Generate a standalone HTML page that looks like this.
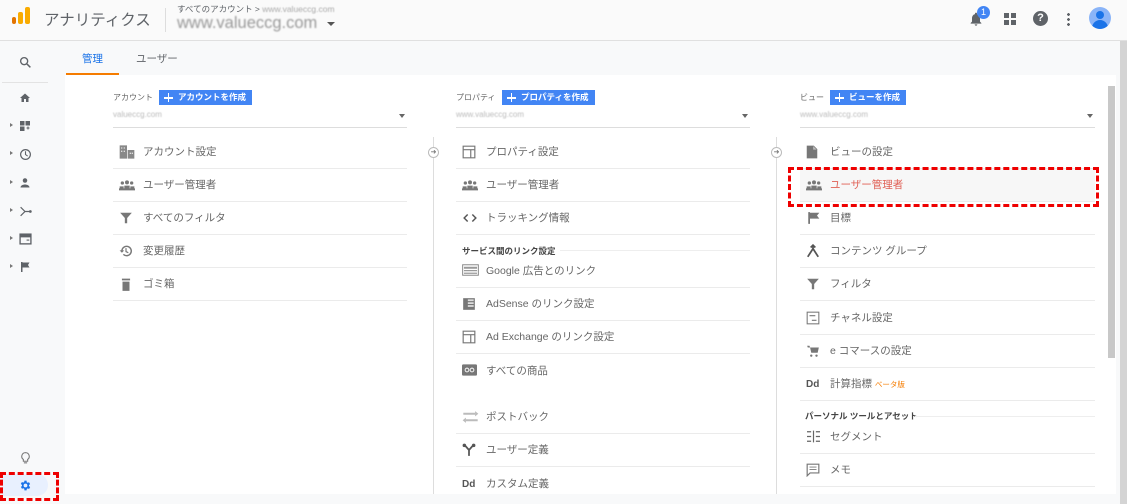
<!DOCTYPE html>
<html><head><meta charset="utf-8"><style>
*{margin:0;padding:0;box-sizing:border-box}
body{width:1127px;height:504px;overflow:hidden;background:#f8f9fa;font-family:"Liberation Sans","Noto Sans CJK JP",sans-serif;position:relative;color:#5f6368}
.a{position:absolute}
.hdr{left:0;top:0;width:1127px;height:41px;background:#fafafa;border-bottom:1px solid #e0e0e0}
.side{left:0;top:41px;width:65px;height:463px;background:#f8f9fa}
.card{left:65px;top:75px;width:1051px;height:419px;background:#fff}
.it{position:absolute;height:33px;font-size:10.5px;color:#666;line-height:33px;border-bottom:1px solid #ebebeb}
.it svg{position:absolute;left:6px;top:9px}
.it span{position:absolute;left:30px}
.lbl{position:absolute;font-size:9px;color:#444;font-weight:bold}
.btn{position:absolute;height:15px;background:#4285f4;color:#fff;font-size:8.5px;font-weight:bold;line-height:15px;padding:0 6px 0 19px}
.btn:before{content:"";position:absolute;left:5px;top:7px;width:9px;height:1.6px;background:#fff}
.btn:after{content:"";position:absolute;left:8.7px;top:3.3px;width:1.6px;height:9px;background:#fff}
.dd{position:absolute;height:20px;border-bottom:1px solid #ddd;font-size:8px;color:#bbb;line-height:14px}
.dd i{filter:blur(.6px);font-style:normal}
.dd:after{content:"";position:absolute;right:2px;top:6px;border:3px solid transparent;border-top:4px solid #666}
.vl{position:absolute;width:1px;background:#ddd;top:137px;height:357px}
.ci{position:absolute;width:11px;height:11px;border:1px solid #bbb;border-radius:50%;background:#fff;font-size:7px;line-height:9px;text-align:center;color:#777}
.sic{position:absolute;left:19px}
.tri{position:absolute;left:10px;border:2.5px solid transparent;border-left:3px solid #777}
</style></head><body>
<div class="a hdr"></div>
<div class="a" style="left:12px;top:17px;width:4px;height:7px;background:#e37400;border-radius:2px"></div>
<div class="a" style="left:18px;top:12px;width:5px;height:12px;background:#f9ab00;border-radius:2px"></div>
<div class="a" style="left:25px;top:7px;width:5px;height:17px;background:#f9ab00;border-radius:2px"></div>
<div class="a" style="left:44px;top:8px;font-size:15.5px;color:#5f6368">アナリティクス</div>
<div class="a" style="left:165px;top:8px;width:1px;height:24px;background:#ddd"></div>
<div class="a" style="left:177px;top:3px;font-size:8.5px;color:#5f6368">すべてのアカウント &gt; <span style="color:#aaa;filter:blur(.5px)">www.valueccg.com</span></div>
<div class="a" style="left:177px;top:14px;font-size:16.5px;color:#999;filter:blur(.8px)">www.valueccg.com</div>
<div class="a" style="left:327px;top:22px;border:4px solid transparent;border-top:4px solid #555"></div>
<svg class="a" style="left:968px;top:10px" width="16" height="18" viewBox="0 0 24 24"><path fill="#5f6368" d="M12 22c1.1 0 2-.9 2-2h-4c0 1.1.9 2 2 2zm6-6v-5c0-3.07-1.640-5.64-4.5-6.32V4c0-.83-.67-1.5-1.5-1.5s-1.5.67-1.5 1.5v.68C7.63 5.36 6 7.920 6 11v5l-2 2v1h16v-1l-2-2z"/></svg>
<div class="a" style="left:977px;top:6px;width:13px;height:13px;border-radius:50%;background:#4285f4;color:#fff;font-size:9px;text-align:center;line-height:13px">1</div>
<div class="a" style="left:1004px;top:13px;width:12px;height:12px;background:linear-gradient(#5f6368,#5f6368) 0 0/5px 5px no-repeat,linear-gradient(#5f6368,#5f6368) 7px 0/5px 5px no-repeat,linear-gradient(#5f6368,#5f6368) 0 7px/5px 5px no-repeat,linear-gradient(#5f6368,#5f6368) 7px 7px/5px 5px no-repeat"></div>
<div class="a" style="left:1033px;top:11px;width:15px;height:15px;border-radius:50%;background:#5f6368;color:#fff;font-size:11px;font-weight:bold;text-align:center;line-height:15px">?</div>
<div class="a" style="left:1067px;top:12px;width:3px;height:14px;background:radial-gradient(circle,#5f6368 1.3px,transparent 1.5px) 0 0/3px 5px"></div>
<div class="a" style="left:1089px;top:7px;width:22px;height:22px;border-radius:50%;background:#8ab4f8;overflow:hidden"><div class="a" style="left:7px;top:4px;width:8px;height:8px;border-radius:50%;background:#1a73e8"></div><div class="a" style="left:3px;top:13px;width:16px;height:12px;border-radius:8px 8px 0 0;background:#1a73e8"></div></div>
<div class="a side"></div>
<div class="a" style="left:2px;top:82px;width:46px;height:1px;background:#e3e3e3"></div>
<svg class="sic" style="top:56px" width="13" height="13" viewBox="0 0 24 24"><circle cx="9.5" cy="9.5" r="6.5" fill="none" stroke="#5f6368" stroke-width="2.5"/><path d="M14.5 14.5L21 21" stroke="#5f6368" stroke-width="2.8"/></svg>
<svg class="sic" style="top:92px" width="12" height="12" viewBox="0 0 24 24"><path fill="#5f6368" d="M10 20v-6h4v6h5v-8h3L12 3 2 12h3v8z"/></svg>
<div class="tri" style="top:123px"></div><svg class="sic" style="top:120px" width="12" height="12" viewBox="0 0 24 24"><path fill="#5f6368" d="M2 2h9v9H2zM13 2h9v9h-9zM2 13h9v9H2zM15 15h2v-2h2v2h2v2h-2v2h-2v-2h-2z"/></svg>
<div class="tri" style="top:151px"></div><svg class="sic" style="top:148px" width="13" height="13" viewBox="0 0 24 24"><circle cx="12" cy="12" r="9" fill="none" stroke="#5f6368" stroke-width="2.2"/><path d="M12 6v6l4 3" fill="none" stroke="#5f6368" stroke-width="2"/></svg>
<div class="tri" style="top:180px"></div><svg class="sic" style="top:177px" width="12" height="12" viewBox="0 0 24 24"><circle cx="12" cy="7" r="4.5" fill="#5f6368"/><path fill="#5f6368" d="M3 21c0-4 5-6 9-6s9 2 9 6z"/></svg>
<div class="tri" style="top:208px"></div><svg class="sic" style="top:205px" width="13" height="13" viewBox="0 0 24 24"><path d="M3 4l8 8-8 8M11 12h10" fill="none" stroke="#5f6368" stroke-width="2.2"/><circle cx="21" cy="12" r="2.5" fill="#5f6368"/></svg>
<div class="tri" style="top:236px"></div><svg class="sic" style="top:233px" width="13" height="12" viewBox="0 0 24 22"><rect x="2" y="2" width="20" height="18" fill="none" stroke="#5f6368" stroke-width="2.5"/><rect x="2" y="2" width="20" height="6" fill="#5f6368"/><rect x="14" y="12" width="5" height="2" fill="#5f6368"/></svg>
<div class="tri" style="top:264px"></div><svg class="sic" style="top:261px" width="12" height="12" viewBox="0 0 24 24"><path fill="#5f6368" d="M4 2h3v20H4zM7 3h14l-3 5 3 5H7z"/></svg>
<svg class="sic" style="top:451px" width="13" height="14" viewBox="0 0 24 26"><path d="M12 3a7 7 0 0 0-4 12.7V19h8v-3.3A7 7 0 0 0 12 3z" fill="none" stroke="#777" stroke-width="2"/><path d="M9 22h6" stroke="#777" stroke-width="2"/></svg>
<div class="a" style="left:2px;top:474px;width:46px;height:22px;border-radius:0 11px 11px 0;background:#e8f0fe"></div>
<svg class="a" style="left:19px;top:479px" width="13" height="13" viewBox="0 0 24 24"><path fill="#1a73e8" d="M19.4 13a7.6 7.6 0 0 0 0-2l2.1-1.6-2-3.5-2.5 1a7 7 0 0 0-1.7-1L15 3h-4l-.4 2.6a7 7 0 0 0-1.7 1l-2.5-1-2 3.5L6.6 11a7.6 7.6 0 0 0 0 2l-2.1 1.6 2 3.5 2.5-1a7 7 0 0 0 1.7 1L11 21h4l.4-2.6a7 7 0 0 0 1.7-1l2.5 1 2-3.5zM13 15.5a3.5 3.5 0 1 1 0-7 3.5 3.5 0 0 1 0 7z" transform="translate(-1 0)"/></svg>
<div class="a" style="left:0;top:472px;width:59px;height:29px;border:3px dashed #e00"></div>
<div class="a" style="left:82px;top:51px;font-size:10.5px;color:#1a73e8">管理</div>
<div class="a" style="left:66px;top:73px;width:53px;height:2px;background:#f57c00"></div>
<div class="a" style="left:136px;top:51px;font-size:10.5px;color:#5f6368">ユーザー</div>
<div class="a card"></div>
<div class="a" style="left:1108px;top:86px;width:7px;height:272px;background:#c8c8c8"></div>
<div class="a" style="left:1120px;top:41px;width:7px;height:463px;background:#d4d4d4"></div>
<div class="a" style="left:65px;top:494px;width:1055px;height:10px;background:#f8f9fa"></div>

<div class="lbl" style="left:113px;top:92px;font-weight:normal;color:#666;font-size:8px">アカウント</div>
<div class="btn" style="left:159px;top:90px">アカウントを作成</div>
<div class="dd" style="left:113px;top:108px;width:294px"><i>valueccg.com</i></div>
<div class="it" style="left:113px;top:136px;width:294px"><svg width="16" height="14" viewBox="0 0 24 20"><path fill="#888" d="M1 0h11v20H1zM13 7h10v13H13z"/><path fill="#ddd" d="M3 3h2v2H3zm4 0h2v2H7zM3 8h2v2H3zm4 0h2v2H7zM16 11h2v2h-2zm3 0h2v2h-2z"/></svg><span>アカウント設定</span></div>
<div class="it" style="left:113px;top:169px;width:294px"><svg width="16" height="14" viewBox="0 0 24 20"><circle cx="5" cy="7" r="2.5" fill="#777"/><circle cx="12" cy="6" r="3" fill="#777"/><circle cx="19" cy="7" r="2.5" fill="#777"/><path fill="#777" d="M0 15h24v3H0zM8 11h8v4H8zM1 12h6v3H1zM17 12h6v3h-6z"/></svg><span>ユーザー管理者</span></div>
<div class="it" style="left:113px;top:202px;width:294px"><svg width="14" height="14" viewBox="0 0 24 24"><path fill="#777" d="M2 3h20l-8 9v9h-4v-9z"/></svg><span>すべてのフィルタ</span></div>
<div class="it" style="left:113px;top:235px;width:294px"><svg width="14" height="14" viewBox="0 0 24 24"><path d="M5 12a8 8 0 1 1 2.5 5.8" fill="none" stroke="#777" stroke-width="2.5"/><path fill="#777" d="M1 11h8l-4 4z"/><path d="M12 7v6l4 2" fill="none" stroke="#777" stroke-width="2"/></svg><span>変更履歴</span></div>
<div class="it" style="left:113px;top:268px;width:294px"><svg width="14" height="15" viewBox="0 0 24 24"><path fill="#777" d="M5 2h14v3H5zM6 7h12v16H6z"/></svg><span>ゴミ箱</span></div>

<div class="vl" style="left:433px"></div><div class="ci" style="left:428px;top:147px">➜</div>
<div class="lbl" style="left:456px;top:92px;font-weight:normal;color:#666;font-size:8px">プロパティ</div>
<div class="btn" style="left:502px;top:90px">プロパティを作成</div>
<div class="dd" style="left:456px;top:108px;width:294px"><i>www.valueccg.com</i></div>
<div class="it" style="left:456px;top:136px;width:294px"><svg width="14" height="14" viewBox="0 0 24 24"><path d="M2 2h20v20H2zM2 8h20M15 8v14" fill="none" stroke="#777" stroke-width="2"/></svg><span>プロパティ設定</span></div>
<div class="it" style="left:456px;top:169px;width:294px"><svg width="16" height="14" viewBox="0 0 24 20"><circle cx="5" cy="7" r="2.5" fill="#777"/><circle cx="12" cy="6" r="3" fill="#777"/><circle cx="19" cy="7" r="2.5" fill="#777"/><path fill="#777" d="M0 15h24v3H0zM8 11h8v4H8zM1 12h6v3H1zM17 12h6v3h-6z"/></svg><span>ユーザー管理者</span></div>
<div class="it" style="left:456px;top:202px;width:294px"><svg width="16" height="14" viewBox="0 0 24 24"><path d="M8 6l-6 6 6 6M16 6l6 6-6 6" fill="none" stroke="#555" stroke-width="2.5"/></svg><span>トラッキング情報</span></div>
<div class="lbl" style="left:462px;top:245px;font-size:8.5px">サービス間のリンク設定</div>
<div class="a" style="left:560px;top:250px;width:190px;height:1px;background:#eee"></div>
<div class="it" style="left:456px;top:255px;width:294px"><svg width="17" height="12" viewBox="0 0 26 18"><rect x="1" y="1" width="24" height="16" fill="none" stroke="#888" stroke-width="1.5"/><path fill="#999" d="M3 4h20v3H3zM3 9h20v2H3zM3 13h20v2H3z"/></svg><span>Google 広告とのリンク</span></div>
<div class="it" style="left:456px;top:288px;width:294px"><svg width="14" height="14" viewBox="0 0 24 24"><path fill="#777" d="M2 2h20v20H2z"/><path fill="#ddd" d="M10 4h10v3H10zM10 9h10v3H10zM10 14h10v3H10z"/></svg><span>AdSense のリンク設定</span></div>
<div class="it" style="left:456px;top:321px;width:294px"><svg width="14" height="14" viewBox="0 0 24 24"><path d="M2 2h20v20H2zM2 8h20M15 8v14" fill="none" stroke="#777" stroke-width="2"/></svg><span>Ad Exchange のリンク設定</span></div>
<div class="it" style="left:456px;top:355px;width:294px;border:none"><svg width="15" height="12" viewBox="0 0 24 18"><rect width="24" height="18" rx="2" fill="#777"/><circle cx="8" cy="9" r="3" fill="none" stroke="#fff" stroke-width="1.5"/><circle cx="16" cy="9" r="3" fill="none" stroke="#fff" stroke-width="1.5"/></svg><span>すべての商品</span></div>
<div class="it" style="left:456px;top:401px;width:294px"><svg width="17" height="14" viewBox="0 0 26 20"><path d="M2 5h18M6 15h18" stroke="#bbb" stroke-width="3"/><path fill="#bbb" d="M20 1v8l5-4zM6 11v8l-5-4z"/></svg><span>ポストバック</span></div>
<div class="it" style="left:456px;top:434px;width:294px"><svg width="14" height="14" viewBox="0 0 24 24"><path d="M4 3l8 9v10M20 3l-8 9" fill="none" stroke="#555" stroke-width="3"/><circle cx="4" cy="4" r="3" fill="#555"/><circle cx="20" cy="4" r="3" fill="#555"/></svg><span>ユーザー定義</span></div>
<div class="it" style="left:456px;top:468px;width:294px;border:none"><b style="position:absolute;left:6px;font-size:10px;color:#555">Dd</b><span>カスタム定義</span></div>

<div class="vl" style="left:776px"></div><div class="ci" style="left:771px;top:147px">➜</div>
<div class="lbl" style="left:800px;top:92px;font-weight:normal;color:#666;font-size:8px">ビュー</div>
<div class="btn" style="left:830px;top:90px">ビューを作成</div>
<div class="dd" style="left:800px;top:108px;width:295px"><i>www.valueccg.com</i></div>
<div class="it" style="left:800px;top:136px;width:295px"><svg width="12" height="14" viewBox="0 0 20 24"><path fill="#777" d="M1 1h12l6 6v16H1z"/><path fill="#fff" d="M12 2v6h6z" opacity=".5"/></svg><span>ビューの設定</span></div>
<div class="it" style="left:800px;top:169px;width:295px;background:#f7f7f7;color:#e06055"><svg width="16" height="14" viewBox="0 0 24 20"><circle cx="5" cy="7" r="2.5" fill="#777"/><circle cx="12" cy="6" r="3" fill="#777"/><circle cx="19" cy="7" r="2.5" fill="#777"/><path fill="#777" d="M0 15h24v3H0zM8 11h8v4H8zM1 12h6v3H1zM17 12h6v3h-6z"/></svg><span>ユーザー管理者</span></div>
<div class="a" style="left:788px;top:167px;width:311px;height:40px;border:3px dashed #e00"></div>
<div class="it" style="left:800px;top:202px;width:295px"><svg width="15" height="14" viewBox="0 0 24 24"><path fill="#777" d="M3 2h3v20H3zM6 3h16l-4 5 4 5H6z"/></svg><span>目標</span></div>
<div class="it" style="left:800px;top:235px;width:295px"><svg width="14" height="14" viewBox="0 0 24 24"><path d="M3 22l9-14 9 14M12 8V2M8 6l4-4 4 4" fill="none" stroke="#555" stroke-width="3"/></svg><span>コンテンツ グループ</span></div>
<div class="it" style="left:800px;top:268px;width:295px"><svg width="14" height="14" viewBox="0 0 24 24"><path fill="#777" d="M2 3h20l-8 9v9h-4v-9z"/></svg><span>フィルタ</span></div>
<div class="it" style="left:800px;top:302px;width:295px"><svg width="14" height="14" viewBox="0 0 24 24"><rect x="2" y="2" width="20" height="20" fill="none" stroke="#777" stroke-width="1.8"/><path d="M6 8h10M10 16h8" stroke="#777" stroke-width="2"/></svg><span>チャネル設定</span></div>
<div class="it" style="left:800px;top:335px;width:295px"><svg width="14" height="14" viewBox="0 0 24 24"><path fill="#777" d="M7 6h15l-2 9H9zM2 3h4l1 3H3z"/><circle cx="9" cy="20" r="2" fill="#777"/><circle cx="18" cy="20" r="2" fill="#777"/></svg><span>e コマースの設定</span></div>
<div class="it" style="left:800px;top:368px;width:295px"><b style="position:absolute;left:6px;font-size:10px;color:#555">Dd</b><span>計算指標 <small style="color:#f57c00;font-size:7.5px">ベータ版</small></span></div>
<div class="lbl" style="left:805px;top:410px;font-size:8.5px">パーソナル ツールとアセット</div>
<div class="a" style="left:915px;top:416px;width:180px;height:1px;background:#eee"></div>
<div class="it" style="left:800px;top:421px;width:295px"><svg width="15" height="13" viewBox="0 0 24 22"><path d="M1 3h7M1 11h7M1 19h7M16 3h7M16 11h7M16 19h7M12 1v20" stroke="#666" stroke-width="2"/></svg><span>セグメント</span></div>
<div class="it" style="left:800px;top:454px;width:295px"><svg width="14" height="14" viewBox="0 0 24 24"><path d="M2 2h20v15H7l-5 5z" fill="none" stroke="#777" stroke-width="2"/><path d="M6 7h12M6 11h12" stroke="#777" stroke-width="1.5"/></svg><span>メモ</span></div>
</body></html>
